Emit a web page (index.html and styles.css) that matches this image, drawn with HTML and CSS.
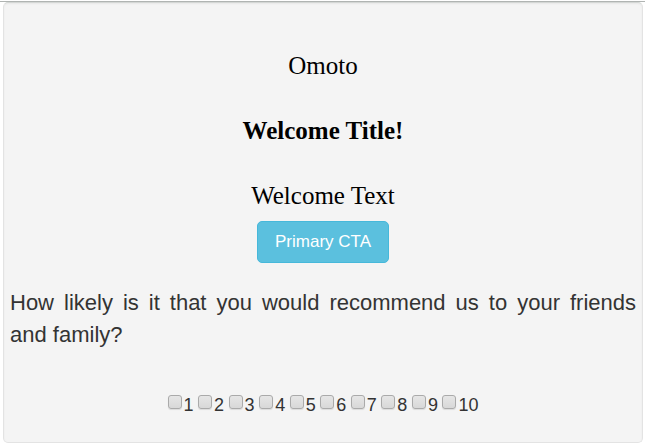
FILE: index.html
```html
<!DOCTYPE html>
<html lang="en">
<head>
<meta charset="utf-8">
<title>Omoto</title>
<link rel="stylesheet" href="styles.css">
</head>
<body>
<main class="well">
  <header class="intro">
    <p class="line">Omoto</p>
    <h1 class="line title">Welcome Title!</h1>
    <p class="line">Welcome Text</p>
    <button class="cta" type="button">Primary CTA</button>
  </header>
  <form>
    <p class="question" id="question">How likely is it that you would recommend us to your friends and family?</p>
    <div class="scores" role="group" aria-labelledby="question">
      <label class="score"><input type="checkbox">1</label>
      <label class="score"><input type="checkbox">2</label>
      <label class="score"><input type="checkbox">3</label>
      <label class="score"><input type="checkbox">4</label>
      <label class="score"><input type="checkbox">5</label>
      <label class="score"><input type="checkbox">6</label>
      <label class="score"><input type="checkbox">7</label>
      <label class="score"><input type="checkbox">8</label>
      <label class="score"><input type="checkbox">9</label>
      <label class="score"><input type="checkbox">10</label>
    </div>
  </form>
</main>
</body>
</html>
```
FILE: styles.css
```css
* {
  box-sizing: border-box;
}

body {
  margin: 0;
  padding: 1px 2px 4px 3px;
  background: linear-gradient(#b0b4b2, #b0b4b2) 0 1px / 100% 1px no-repeat #fff;
  font-family: "Liberation Sans", Arial, sans-serif;
  color: #333;
}

.well {
  margin-top: 1px;
  padding: 47px 6px 25px;
  background: #f4f4f4;
  border: 1px solid #e3e3e3;
  border-top-color: #d4d7d5;
  border-radius: 5px;
  box-shadow: inset 0 1px 2px rgba(0, 0, 0, 0.05);
}

.intro {
  display: flex;
  flex-direction: column;
  align-items: center;
  color: #000;
}

.line {
  margin: 0 0 34px;
  font: 25px/31px "Liberation Serif", "Times New Roman", serif;
}

.title {
  font-weight: bold;
}

.cta {
  margin-top: -24px;
  padding: 9px 17px;
  background: #5bc0de;
  border: 1px solid #46b8da;
  border-radius: 5px;
  color: #fff;
  font: 17px/22px "Liberation Sans", Arial, sans-serif;
}

.question {
  margin: 24px 0 0;
  font-size: 22px;
  line-height: 32px;
  text-align: justify;
}

.scores {
  display: flex;
  justify-content: space-between;
  max-width: 311px;
  margin: 42px auto 0;
  font-size: 18px;
  line-height: 24px;
}

.score {
  display: flex;
  align-items: center;
  gap: 2px;
}

.score input {
  appearance: none;
  width: 14px;
  height: 14px;
  margin: 0 0 6px;
  border: 1px solid #aaa;
  border-radius: 3px;
  background: linear-gradient(#e6e6e6, #d8d8d8);
  box-shadow: 0 1px 1px rgba(0, 0, 0, 0.1);
}

.score input:checked {
  background: #5bc0de;
}
```
